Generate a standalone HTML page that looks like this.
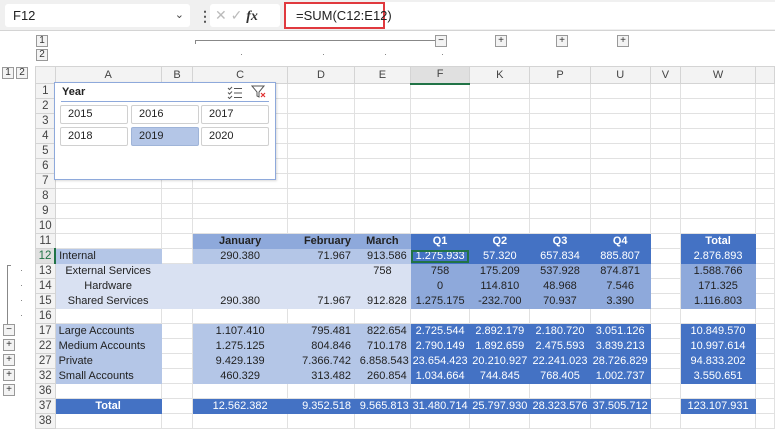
<!DOCTYPE html>
<html><head><meta charset="utf-8"><style>
*{box-sizing:border-box;margin:0;padding:0}
body{width:775px;height:420px;overflow:hidden;background:#fff;font-family:"Liberation Sans",Arial,sans-serif;font-size:11px;color:#222;position:relative}
.abs{position:absolute}
#fbar{left:0;top:0;width:775px;height:31px;background:#f0f0f0;border-bottom:1px solid #d4d4d4}
table{position:absolute;left:35px;top:66px;border-collapse:collapse;table-layout:fixed}
td{height:15px;border:1px solid #e1e1e1;padding:0 3px;white-space:nowrap;overflow:hidden;text-align:right;line-height:13px}
tr.h td{height:17px;background:#f3f3f3;text-align:center;color:#444;border-color:#d4d4d4}
td.r{background:#f3f3f3;text-align:center;color:#444;border-color:#d4d4d4;padding:0;font-size:11.5px}
td.l{text-align:left}
td.c{text-align:center}
.b1{background:#4472c4;color:#fff;border-color:#4472c4}
.b2{background:#8ea9db;border-color:#8ea9db}
.b3{background:#b4c6e7;border-color:#b4c6e7}
.b4{background:#d9e1f2;border-color:#d9e1f2}
.bd{font-weight:bold}
.ob{position:absolute;width:12px;height:12px;border:1px solid #999;background:#f3f3f3;font-size:10px;line-height:10px;text-align:center;color:#333}
.sb{position:absolute;height:19px;border:1px solid #d0d0d0;border-radius:2px;background:#fff;font-size:11px;line-height:17px;padding-left:7px}
.dot{position:absolute;width:1px;height:1px;background:#888}
</style></head><body>
<div id="fbar" class="abs"></div>
<div class="abs" style="left:5px;top:4px;width:185px;height:23px;background:#fff;border-radius:3px;font-size:13px;line-height:23px;padding-left:8px">F12<span style="position:absolute;right:6px;top:0;font-size:11px;color:#444">&#8964;</span></div>
<div class="abs" style="left:198px;top:8px;font-size:14px;color:#555;font-weight:bold">&#8942;</div>
<div class="abs" style="left:210px;top:4px;width:70px;height:23px;background:#fff;border-radius:3px;font-size:14px;line-height:23px;color:#bbb;padding-left:5px">&#10005; &#10003; <i style="color:#333;font-family:'Liberation Serif',serif;font-weight:bold">fx</i></div>
<div class="abs" style="left:284px;top:2px;width:491px;height:27px;background:#fff"></div>
<div class="abs" style="left:284px;top:2px;width:101px;height:27px;border:2px solid #e0393e;font-size:13px;line-height:23px;padding-left:10px">=SUM(C12:E12)</div>
<div class="ob" style="left:36px;top:35px">1</div><div class="ob" style="left:36px;top:49px">2</div>
<div class="ob" style="left:2px;top:67px">1</div><div class="ob" style="left:16px;top:67px">2</div>
<div class="abs" style="left:195px;top:40px;width:240px;height:1px;background:#888"></div>
<div class="abs" style="left:195px;top:40px;width:1px;height:4px;background:#888"></div>
<div class="dot" style="left:241px;top:54px"></div><div class="dot" style="left:323px;top:54px"></div><div class="dot" style="left:385px;top:54px"></div><div class="dot" style="left:442px;top:54px"></div>
<div class="ob" style="left:435px;top:35px">&minus;</div>
<div class="ob" style="left:495px;top:35px">+</div>
<div class="ob" style="left:556px;top:35px">+</div>
<div class="ob" style="left:617px;top:35px">+</div>
<div class="abs" style="left:7px;top:265px;width:1px;height:59px;background:#888"></div>
<div class="abs" style="left:7px;top:265px;width:4px;height:1px;background:#888"></div>
<div class="dot" style="left:21px;top:270px"></div><div class="dot" style="left:21px;top:285px"></div><div class="dot" style="left:21px;top:300px"></div><div class="dot" style="left:21px;top:315px"></div>
<div class="ob" style="left:3px;top:324px">&minus;</div>
<div class="ob" style="left:3px;top:339px">+</div>
<div class="ob" style="left:3px;top:354px">+</div>
<div class="ob" style="left:3px;top:369px">+</div>
<div class="ob" style="left:3px;top:384px">+</div>
<table>
<colgroup><col style="width:20px"><col style="width:107px"><col style="width:33px"><col style="width:97px"><col style="width:68px"><col style="width:56px"><col style="width:60px"><col style="width:60px"><col style="width:61px"><col style="width:60px"><col style="width:32px"><col style="width:75px"><col style="width:20px"></colgroup>
<tr class="h"><td></td><td>A</td><td>B</td><td>C</td><td>D</td><td>E</td><td style="border-bottom:2px solid #217346;background:#e0e0e0">F</td><td>K</td><td>P</td><td>U</td><td>V</td><td>W</td><td></td></tr>
<tr><td class="r">1</td><td></td><td></td><td></td><td></td><td></td><td></td><td></td><td></td><td></td><td></td><td></td><td></td></tr>
<tr><td class="r">2</td><td></td><td></td><td></td><td></td><td></td><td></td><td></td><td></td><td></td><td></td><td></td><td></td></tr>
<tr><td class="r">3</td><td></td><td></td><td></td><td></td><td></td><td></td><td></td><td></td><td></td><td></td><td></td><td></td></tr>
<tr><td class="r">4</td><td></td><td></td><td></td><td></td><td></td><td></td><td></td><td></td><td></td><td></td><td></td><td></td></tr>
<tr><td class="r">5</td><td></td><td></td><td></td><td></td><td></td><td></td><td></td><td></td><td></td><td></td><td></td><td></td></tr>
<tr><td class="r">6</td><td></td><td></td><td></td><td></td><td></td><td></td><td></td><td></td><td></td><td></td><td></td><td></td></tr>
<tr><td class="r">7</td><td></td><td></td><td></td><td></td><td></td><td></td><td></td><td></td><td></td><td></td><td></td><td></td></tr>
<tr><td class="r">8</td><td></td><td></td><td></td><td></td><td></td><td></td><td></td><td></td><td></td><td></td><td></td><td></td></tr>
<tr><td class="r">9</td><td></td><td></td><td></td><td></td><td></td><td></td><td></td><td></td><td></td><td></td><td></td><td></td></tr>
<tr><td class="r">10</td><td></td><td></td><td></td><td></td><td></td><td></td><td></td><td></td><td></td><td></td><td></td><td></td></tr>
<tr><td class="r">11</td><td></td><td></td><td class="b2 c bd">January</td><td class="b2 bd">February</td><td class="b2 c bd">March</td><td class="b1 c bd">Q1</td><td class="b1 c bd">Q2</td><td class="b1 c bd">Q3</td><td class="b1 c bd">Q4</td><td></td><td class="b1 c bd">Total</td><td></td></tr>
<tr><td class="r" style="color:#217346;background:#e0e0e0;border-right:2px solid #217346">12</td><td class="b3 l">Internal</td><td></td><td class="b3 c">290.380</td><td class="b3">71.967</td><td class="b3">913.586</td><td class="b1 c" style="outline:2px solid #217346;outline-offset:-3px">1.275.933</td><td class="b1 c">57.320</td><td class="b1 c">657.834</td><td class="b1 c">885.807</td><td></td><td class="b1 c">2.876.893</td><td></td></tr>
<tr><td class="r">13</td><td class="b4 c">External Services</td><td class="b4"></td><td class="b4"></td><td class="b4"></td><td class="b4 c">758</td><td class="b2 c">758</td><td class="b2 c">175.209</td><td class="b2 c">537.928</td><td class="b2 c">874.871</td><td></td><td class="b2 c">1.588.766</td><td></td></tr>
<tr><td class="r">14</td><td class="b4 c">Hardware</td><td class="b4"></td><td class="b4"></td><td class="b4"></td><td class="b4"></td><td class="b2 c">0</td><td class="b2 c">114.810</td><td class="b2 c">48.968</td><td class="b2 c">7.546</td><td></td><td class="b2 c">171.325</td><td></td></tr>
<tr><td class="r">15</td><td class="b4 c">Shared Services</td><td class="b4"></td><td class="b4 c">290.380</td><td class="b4">71.967</td><td class="b4">912.828</td><td class="b2 c">1.275.175</td><td class="b2 c">-232.700</td><td class="b2 c">70.937</td><td class="b2 c">3.390</td><td></td><td class="b2 c">1.116.803</td><td></td></tr>
<tr><td class="r">16</td><td></td><td></td><td></td><td></td><td></td><td></td><td></td><td></td><td></td><td></td><td></td><td></td></tr>
<tr><td class="r">17</td><td class="b3 l">Large Accounts</td><td></td><td class="b3 c">1.107.410</td><td class="b3">795.481</td><td class="b3">822.654</td><td class="b1 c">2.725.544</td><td class="b1 c">2.892.179</td><td class="b1 c">2.180.720</td><td class="b1 c">3.051.126</td><td></td><td class="b1 c">10.849.570</td><td></td></tr>
<tr><td class="r">22</td><td class="b3 l">Medium Accounts</td><td></td><td class="b3 c">1.275.125</td><td class="b3">804.846</td><td class="b3">710.178</td><td class="b1 c">2.790.149</td><td class="b1 c">1.892.659</td><td class="b1 c">2.475.593</td><td class="b1 c">3.839.213</td><td></td><td class="b1 c">10.997.614</td><td></td></tr>
<tr><td class="r">27</td><td class="b3 l">Private</td><td></td><td class="b3 c">9.429.139</td><td class="b3">7.366.742</td><td class="b3" style="padding:0 1px">6.858.543</td><td class="b1 c" style="padding:0">23.654.423</td><td class="b1 c" style="padding:0">20.210.927</td><td class="b1 c" style="padding:0">22.241.023</td><td class="b1 c" style="padding:0">28.726.829</td><td></td><td class="b1 c">94.833.202</td><td></td></tr>
<tr><td class="r">32</td><td class="b3 l">Small Accounts</td><td></td><td class="b3 c">460.329</td><td class="b3">313.482</td><td class="b3">260.854</td><td class="b1 c">1.034.664</td><td class="b1 c">744.845</td><td class="b1 c">768.405</td><td class="b1 c">1.002.737</td><td></td><td class="b1 c">3.550.651</td><td></td></tr>
<tr><td class="r">36</td><td></td><td></td><td></td><td></td><td></td><td></td><td></td><td></td><td></td><td></td><td></td><td></td></tr>
<tr><td class="r">37</td><td class="b1 c bd">Total</td><td></td><td class="b1 c">12.562.382</td><td class="b1">9.352.518</td><td class="b1" style="padding:0 1px">9.565.813</td><td class="b1 c" style="padding:0">31.480.714</td><td class="b1 c" style="padding:0">25.797.930</td><td class="b1 c" style="padding:0">28.323.576</td><td class="b1 c" style="padding:0">37.505.712</td><td></td><td class="b1 c">123.107.931</td><td></td></tr>
<tr><td class="r">38</td><td></td><td></td><td></td><td></td><td></td><td></td><td></td><td></td><td></td><td></td><td></td><td></td></tr>
</table>
<div class="abs" style="left:54px;top:82px;width:222px;height:98px;background:#fff;border:1px solid #8ea9db;box-shadow:1px 1px 2px rgba(0,0,0,.15)">
<div class="abs" style="left:7px;top:3px;font-weight:bold;font-size:11px">Year</div>
<svg class="abs" style="left:172px;top:3px" width="16" height="13" viewBox="0 0 16 13"><path d="M1 2l1.5 1.5L5 1M1 6.5l1.5 1.5L5 5.5M1 11l1.5 1.5L5 10" fill="none" stroke="#555" stroke-width="1"/><path d="M7 2.5h8M7 7h8M7 11.5h8" stroke="#555" stroke-width="1"/></svg>
<svg class="abs" style="left:196px;top:2px" width="16" height="14" viewBox="0 0 16 14"><path d="M1 1h12l-5 6v5l-2-1V7z" fill="none" stroke="#555" stroke-width="1"/><path d="M10 8l4 4M14 8l-4 4" stroke="#e03030" stroke-width="1.2"/></svg>
<div class="abs" style="left:6px;top:18px;width:208px;height:1px;background:#8ea9db"></div>
</div>
<div class="sb" style="left:60px;top:105px;width:68px">2015</div>
<div class="sb" style="left:131px;top:105px;width:68px">2016</div>
<div class="sb" style="left:201px;top:105px;width:68px">2017</div>
<div class="sb" style="left:60px;top:127px;width:68px">2018</div>
<div class="sb" style="left:131px;top:127px;width:68px;background:#b4c6e7;border-color:#9fb4d8">2019</div>
<div class="sb" style="left:201px;top:127px;width:68px">2020</div>
</body></html>
